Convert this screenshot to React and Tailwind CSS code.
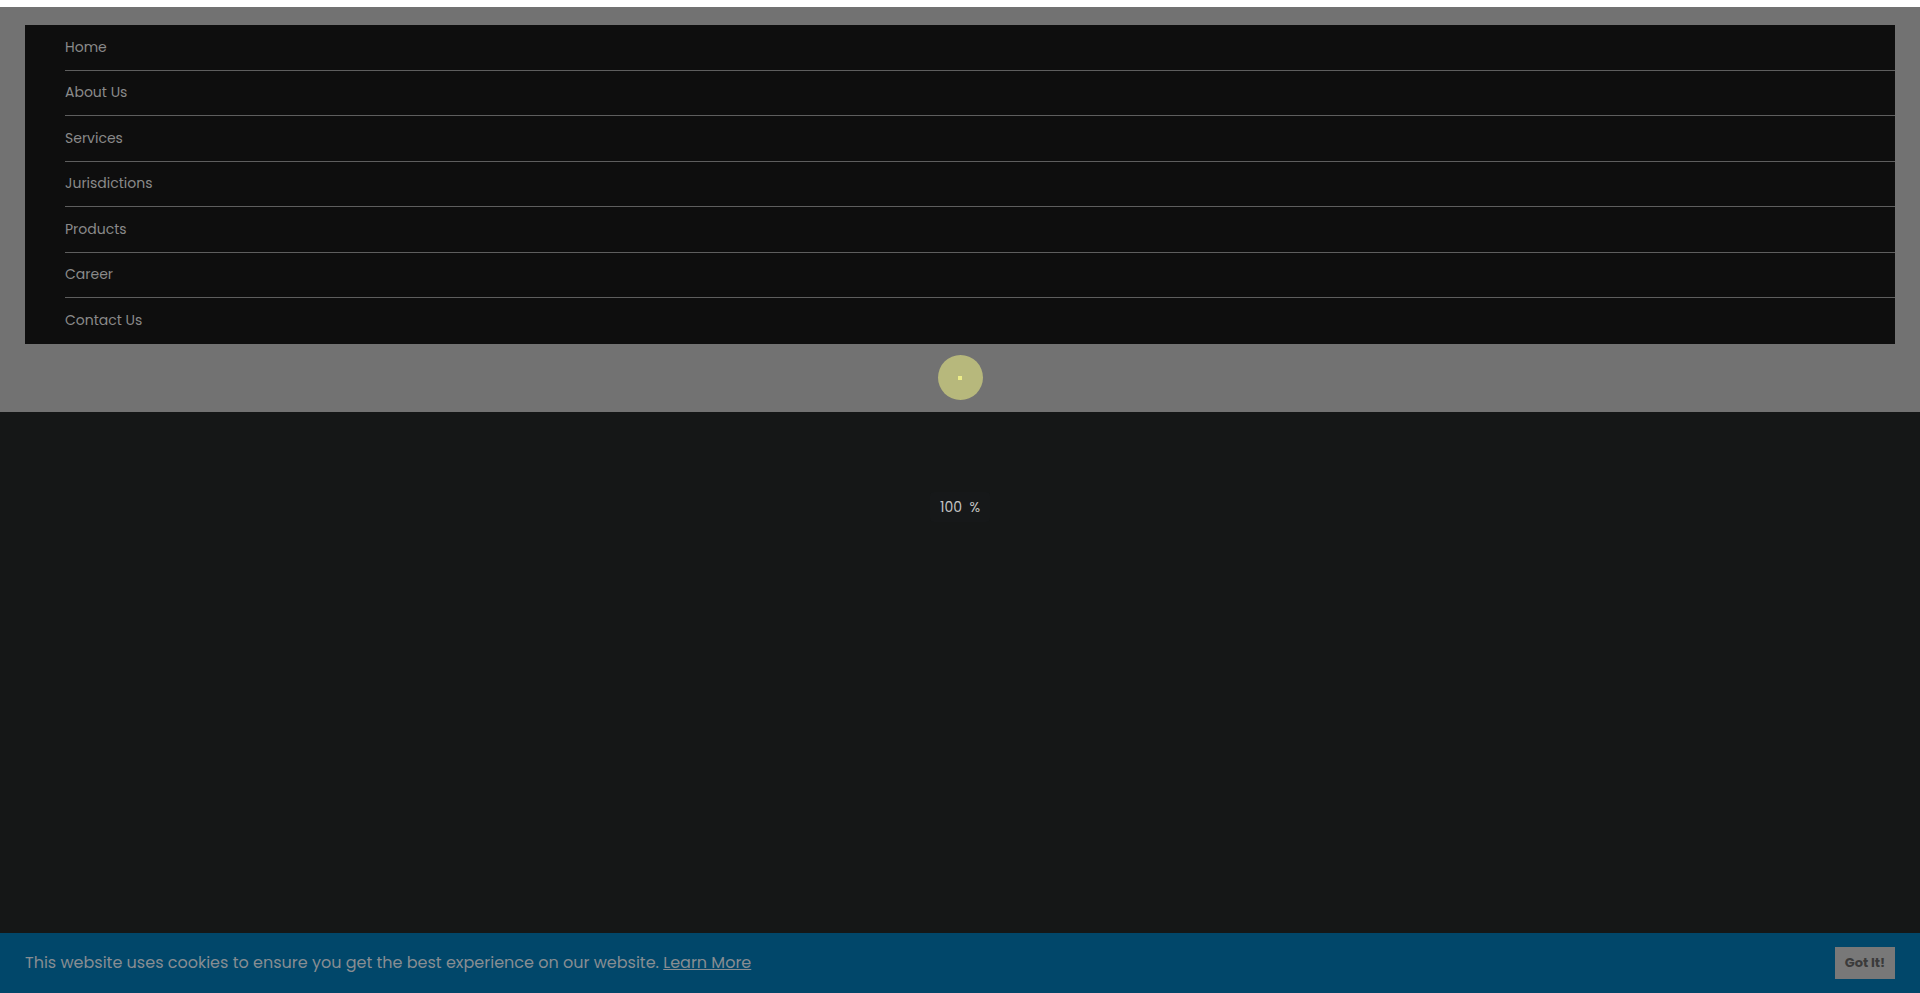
const navItems = ['Home', 'About Us', 'Services', 'Jurisdictions', 'Products', 'Career', 'Contact Us'];

function App() {
  return (
    <div className="flex h-[993px] flex-col overflow-hidden bg-white" style={{ fontFamily: 'Poppins, "Open Sans", "Noto Sans", sans-serif' }}>
      {/* top strip */}
      <div className="h-[7px] shrink-0 bg-white"></div>

      {/* dimmed header with menu */}
      <div className="flex h-[405px] shrink-0 flex-col bg-[#727272] px-[25px] pt-[18px]">
        <nav className="bg-[#0e0e0e]">
          <ul className="ml-[40px]">
            {navItems.map((item, i) => (
              <li
                key={item}
                className={
                  'flex h-[45.5px] items-center text-[14px] text-[#8a8a8a] ' +
                  (i < navItems.length - 1 ? 'border-b border-[#5e5e5e]' : '')
                }
              >
                {item}
              </li>
            ))}
          </ul>
        </nav>
        <div className="flex flex-1 items-center justify-center">
          <div className="flex h-[45px] w-[45px] items-center justify-center rounded-full bg-[#b7b87c]">
            <div className="h-[4px] w-[4px] bg-[#ecec88]"></div>
          </div>
        </div>
      </div>

      {/* preloader */}
      <div className="flex flex-1 justify-center bg-[#151717] pt-[80px]">
        <div className="h-[30px] rounded bg-[#161819] px-[10px] text-[14px] leading-[30px] text-[#c4c4c4]">
          100 &nbsp;%
        </div>
      </div>

      {/* cookie bar */}
      <div className="flex h-[60px] shrink-0 items-center justify-between bg-[#01476a] pl-[25px] pr-[25px]">
        <p className="text-[16px] text-[#878d92]">
          This website uses cookies to ensure you get the best experience on our website.{' '}
          <a href="#" className="underline">Learn More</a>
        </p>
        <button className="h-[32px] w-[60px] bg-[#787878] text-[13px] font-bold text-[#3b3b3b]">
          Got It!
        </button>
      </div>
    </div>
  );
}

export default App;
